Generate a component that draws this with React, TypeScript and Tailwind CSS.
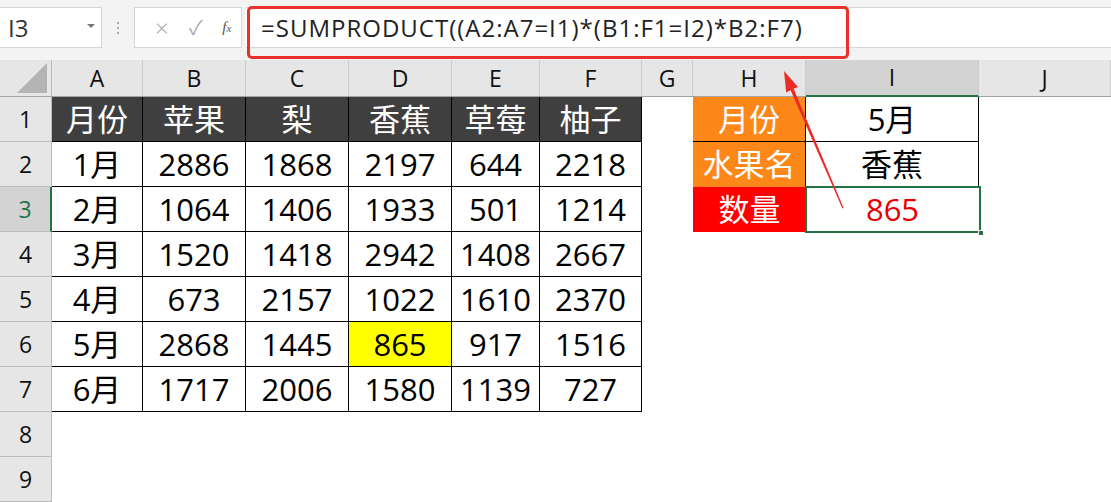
import React from "react";

const FONT = { fontFamily: '"Open Sans", "Noto Sans CJK SC", sans-serif' };

type Col = { k: string; w: string };

const COLS: Col[] = [
  { k: "A", w: "w-[91px]" },
  { k: "B", w: "w-[103px]" },
  { k: "C", w: "w-[103px]" },
  { k: "D", w: "w-[103px]" },
  { k: "E", w: "w-[88px]" },
  { k: "F", w: "w-[102px]" },
  { k: "G", w: "w-[51px]" },
  { k: "H", w: "w-[113px]" },
  { k: "I", w: "w-[173px]" },
  { k: "J", w: "flex-1" },
];

const HEAD = ["月份", "苹果", "梨", "香蕉", "草莓", "柚子"];
const DATA = [
  ["1月", "2886", "1868", "2197", "644", "2218"],
  ["2月", "1064", "1406", "1933", "501", "1214"],
  ["3月", "1520", "1418", "2942", "1408", "2667"],
  ["4月", "673", "2157", "1022", "1610", "2370"],
  ["5月", "2868", "1445", "865", "917", "1516"],
  ["6月", "1717", "2006", "1580", "1139", "727"],
];

const SIDE: Record<number, { label: string; bg: string; val: string }> = {
  1: { label: "月份", bg: "bg-[#fd8719] border-r border-b border-black", val: "5月" },
  2: { label: "水果名", bg: "bg-[#fd8719] border-r border-black", val: "香蕉" },
  3: { label: "数量", bg: "bg-[#ff0000]", val: "865" },
};

function Toolbar() {
  return (
    <div className="relative flex h-[60px] items-start bg-[#f3f3f3] pt-[7px]">
      <div className="flex h-[41px] w-[102px] items-center justify-between border border-l-0 border-[#d6d6d6] bg-white pl-[8px] pr-[6px]">
        <span className="text-[24px] text-[#333]">I3</span>
        <span className="mb-[4px] h-0 w-0 border-x-[4px] border-t-[4px] border-x-transparent border-t-[#777]" />
      </div>
      <div className="flex h-[41px] w-[32px] flex-col items-center justify-center gap-[3px]">
        <span className="h-[2px] w-[2px] bg-[#aaa]" />
        <span className="h-[2px] w-[2px] bg-[#aaa]" />
        <span className="h-[2px] w-[2px] bg-[#aaa]" />
      </div>
      <div className="flex h-[41px] w-[108px] items-center border border-[#d6d6d6] bg-white pl-[10px]">
        <span className="w-[36px] text-center text-[24px] font-light leading-none text-[#aaa]">×</span>
        <span className="w-[36px] text-center text-[20px] leading-none text-[#aaa]">✓</span>
        <span className="w-[30px] text-center text-[15px] italic text-[#555]" style={{ fontFamily: '"Liberation Serif", serif' }}>
          f<span className="text-[11px]">x</span>
        </span>
      </div>
      <div className="ml-[4px] flex h-[41px] flex-1 items-center border-y border-[#d6d6d6] bg-white pl-[15px]">
        <span className="text-[24px] tracking-[1px] text-[#222]">=SUMPRODUCT((A2:A7=I1)*(B1:F1=I2)*B2:F7)</span>
      </div>
      <div className="pointer-events-none absolute left-[247px] top-[6px] h-[53px] w-[602px] rounded-[5px] border-[3px] border-[#e9302a]" />
    </div>
  );
}

function ColHeader() {
  return (
    <div className="flex h-[37px] border-b border-[#a3a3a3] bg-[#e6e6e6]">
      <div className="relative w-[52px] border-r border-[#bcbcbc]">
        <div className="absolute bottom-[3px] right-[4px] h-0 w-0 border-b-[30px] border-l-[30px] border-b-[#b4b4b4] border-l-transparent" />
      </div>
      {COLS.map((c) => (
        <div
          key={c.k}
          className={`${c.w} flex items-center justify-center border-r border-[#cbcbcb] text-[23px] text-[#111] ${
            c.k === "I" ? "-mb-px border-b-2 border-b-[#217346] bg-[#d3d3d3]" : ""
          }`}
        >
          {c.k}
        </div>
      ))}
    </div>
  );
}

function Row({ r }: { r: number }) {
  const sel = r === 3;
  const cells: React.ReactNode[] = [];
  COLS.forEach((c, i) => {
    let cls = `${c.w} flex items-center justify-center text-[31px] leading-none`;
    let txt = "";
    if (i < 6 && r === 1) {
      cls += " bg-[#3f3f3f] text-white border-r border-b border-black";
      txt = HEAD[i];
    } else if (i < 6 && r <= 7) {
      txt = DATA[r - 2][i];
      cls += " border-r border-b border-black text-black";
      if (r === 6 && i === 3) cls += " bg-[#ffff00]";
    } else if (c.k === "H" && SIDE[r]) {
      cls += ` ${SIDE[r].bg} text-white`;
      txt = SIDE[r].label;
    } else if (c.k === "I" && SIDE[r]) {
      cls += " relative";
      if (r < 3) cls += " border-r border-b border-black text-black";
      else cls += " text-[#e60000]";
      txt = SIDE[r].val;
    }
    cells.push(
      <div key={c.k} className={cls}>
        {txt}
        {c.k === "I" && r === 3 && (
          <>
            <div className="pointer-events-none absolute -left-[1px] -top-[1px] bottom-[-1px] right-[-2px] border-2 border-[#217346]" />
            <div className="absolute -bottom-[4px] -right-[5px] h-[6px] w-[6px] border border-white bg-[#217346]" />
          </>
        )}
      </div>
    );
  });
  return (
    <div className="flex h-[45px]">
      <div
        className={`flex w-[52px] items-center justify-center border-b text-[23px] ${
          sel
            ? "border-r-2 border-r-[#217346] border-b-[#bcbcbc] bg-[#d3d3d3] text-[#217346]"
            : "border-r border-[#bcbcbc] bg-[#e6e6e6] text-[#111]"
        }`}
      >
        {r}
      </div>
      {cells}
    </div>
  );
}

function Arrow() {
  return (
    <svg className="pointer-events-none absolute left-0 top-0 h-full w-full" viewBox="0 0 1111 502">
      <polygon
        points="784,71 798,87 793.6,88.8 843.6,208 842.4,208.4 790.6,90.2 786.2,92.6"
        fill="#ec2b24"
      />
    </svg>
  );
}

export default function App() {
  return (
    <div className="relative h-[502px] w-[1111px] overflow-hidden bg-white" style={FONT}>
      <Toolbar />
      <ColHeader />
      {[1, 2, 3, 4, 5, 6, 7, 8, 9].map((r) => (
        <Row key={r} r={r} />
      ))}
      <Arrow />
    </div>
  );
}
